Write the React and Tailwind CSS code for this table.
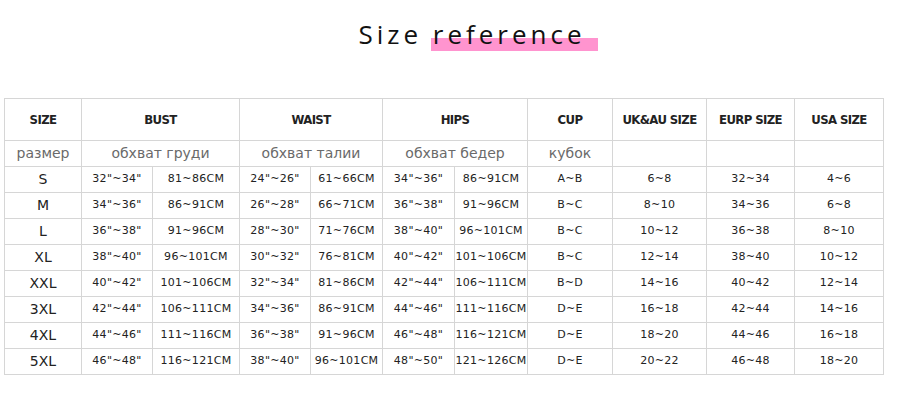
const groups = [
  { label: "SIZE", span: 1, sub: "размер" },
  { label: "BUST", span: 2, sub: "обхват груди" },
  { label: "WAIST", span: 2, sub: "обхват талии" },
  { label: "HIPS", span: 2, sub: "обхват бедер" },
  { label: "CUP", span: 1, sub: "кубок" },
  { label: "UK&AU SIZE", span: 1, sub: "" },
  { label: "EURP SIZE", span: 1, sub: "" },
  { label: "USA SIZE", span: 1, sub: "" },
];

const rows = [
  ["S", "32\"~34\"", "81~86CM", "24\"~26\"", "61~66CM", "34\"~36\"", "86~91CM", "A~B", "6~8", "32~34", "4~6"],
  ["M", "34\"~36\"", "86~91CM", "26\"~28\"", "66~71CM", "36\"~38\"", "91~96CM", "B~C", "8~10", "34~36", "6~8"],
  ["L", "36\"~38\"", "91~96CM", "28\"~30\"", "71~76CM", "38\"~40\"", "96~101CM", "B~C", "10~12", "36~38", "8~10"],
  ["XL", "38\"~40\"", "96~101CM", "30\"~32\"", "76~81CM", "40\"~42\"", "101~106CM", "B~C", "12~14", "38~40", "10~12"],
  ["XXL", "40\"~42\"", "101~106CM", "32\"~34\"", "81~86CM", "42\"~44\"", "106~111CM", "B~D", "14~16", "40~42", "12~14"],
  ["3XL", "42\"~44\"", "106~111CM", "34\"~36\"", "86~91CM", "44\"~46\"", "111~116CM", "D~E", "16~18", "42~44", "14~16"],
  ["4XL", "44\"~46\"", "111~116CM", "36\"~38\"", "91~96CM", "46\"~48\"", "116~121CM", "D~E", "18~20", "44~46", "16~18"],
  ["5XL", "46\"~48\"", "116~121CM", "38\"~40\"", "96~101CM", "48\"~50\"", "121~126CM", "D~E", "20~22", "46~48", "18~20"],
];

const widths = [77, 71, 87, 71, 72, 72, 73, 85, 94, 88, 89];

export default function App() {
  return (
    <div className="w-[900px] h-[416px] bg-white overflow-hidden">
      <div className="flex justify-center pt-[17px] pl-[44px]">
        <h1 className="text-[26px] leading-[34px] tracking-[4px] text-[#111] font-['Open_Sans',sans-serif]">
          Size{" "}
          <span className="relative inline-block">
            <span className="absolute left-[-2px] right-[-12px] top-[21px] h-[13px] bg-[#ff94cf]"></span>
            <span className="relative">reference</span>
          </span>
        </h1>
      </div>

      <table className="mt-[47px] ml-[4px] w-[879px] table-fixed border-collapse text-[#222] font-['DejaVu_Sans',sans-serif]">
        <colgroup>
          {widths.map((w, i) => (
            <col key={i} style={{ width: w }} />
          ))}
        </colgroup>
        <thead>
          <tr className="h-[42px]">
            {groups.map((g) => (
              <th
                key={g.label}
                colSpan={g.span}
                className="border border-[#d6d6d6] text-center text-[13px] font-bold tracking-[-0.6px] font-['DejaVu_Sans_Condensed','DejaVu_Sans',sans-serif]"
              >
                {g.label}
              </th>
            ))}
          </tr>
          <tr className="h-[26px]">
            {groups.map((g) => (
              <td
                key={g.label}
                colSpan={g.span}
                className="border border-[#d6d6d6] text-center text-[14px] text-[#6a6a6a] font-normal"
              >
                {g.sub}
              </td>
            ))}
          </tr>
        </thead>
        <tbody>
          {rows.map((r) => (
            <tr key={r[0]} className="h-[26px]">
              {r.map((c, i) => (
                <td
                  key={i}
                  className={
                    i === 0
                      ? "border border-[#d6d6d6] text-center text-[14px] p-0"
                      : "border border-[#d6d6d6] text-center text-[11px] tracking-[0.3px] p-0 whitespace-nowrap"
                  }
                >
                  {c}
                </td>
              ))}
            </tr>
          ))}
        </tbody>
      </table>
    </div>
  );
}
